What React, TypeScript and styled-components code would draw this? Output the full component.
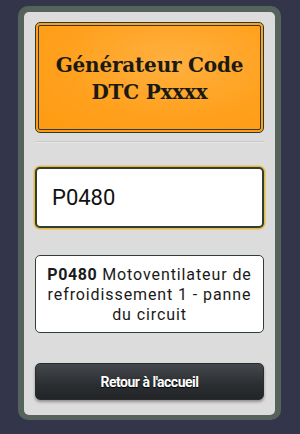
import styled, { createGlobalStyle } from "styled-components";

const GlobalStyle = createGlobalStyle`
  html, body {
    margin: 0;
    padding: 0;
    background: #33354a;
  }
  body {
    font-family: Roboto, "Liberation Sans", sans-serif;
  }
`;

export default function App() {
  return (
    <>
      <GlobalStyle />
      <Frame>
        <Panel>
          <TitleBox>
            <Title>
              Générateur Code
              <br />
              DTC Pxxxx
            </Title>
          </TitleBox>
          <Separator />
          <CodeInput defaultValue="P0480" />
          <Result>
            <ResultText>
              <b>P0480</b> Motoventilateur de refroidissement 1 - panne du circuit
            </ResultText>
          </Result>
          <HomeButton>Retour à l'accueil</HomeButton>
        </Panel>
      </Frame>
    </>
  );
}

const Frame = styled.div`
  margin: 6px 19px 0 18px;
  padding: 6px 6px 5px;
  background: #56635c;
  border-radius: 10px;
`;

const Panel = styled.div`
  display: flex;
  flex-direction: column;
  background: #dcdcdc;
  border-radius: 5px;
  padding: 10px 11px 15px;
`;

const TitleBox = styled.div`
  height: 111px;
  box-sizing: border-box;
  border: 1.5px solid #2e3a30;
  border-radius: 5px;
  padding: 2px;
  background: radial-gradient(ellipse at 60% 35%, #ffb040 0%, #ffa11e 55%, #ff9a10 100%);
`;

const Title = styled.div`
  height: 100%;
  box-sizing: border-box;
  border: 1.5px solid #2e3a30;
  border-radius: 2px;
  display: flex;
  align-items: center;
  justify-content: center;
  text-align: center;
  font-family: "DejaVu Serif", "Liberation Serif", serif;
  font-weight: bold;
  font-size: 20px;
  line-height: 27px;
  letter-spacing: -0.2px;
  color: #1a1a14;
  padding-top: 2px;
`;

const Separator = styled.div`
  height: 1px;
  margin: 8px 0 0;
  background: #c9c9c9;
  border-bottom: 1px solid #e6e6e6;
`;

const CodeInput = styled.input`
  margin-top: 24px;
  height: 61px;
  box-sizing: border-box;
  width: 100%;
  border: 2px solid #2f4033;
  border-radius: 5px;
  background: #ffffff;
  box-shadow: 0 0 0 1.5px #e8b840;
  padding: 0 15px;
  font-family: Roboto, sans-serif;
  font-size: 22px;
  color: #111;
  outline: none;
`;

const Result = styled.div`
  margin-top: 27px;
  height: 78px;
  box-sizing: border-box;
  border: 1.5px solid #2f4033;
  border-radius: 5px;
  background: #ffffff;
  display: flex;
  align-items: center;
  justify-content: center;
  padding: 2px 2px 0;
`;

const ResultText = styled.p`
  margin: 0;
  text-align: center;
  font-family: Roboto, sans-serif;
  font-size: 16px;
  line-height: 20px;
  letter-spacing: 0.9px;
  color: #1a1a1a;

  b {
    font-weight: bold;
    letter-spacing: 0.6px;
  }
`;

const HomeButton = styled.button`
  margin-top: 30px;
  height: 37px;
  border: 1px solid #2a2d30;
  border-radius: 5px;
  background: linear-gradient(#44474b, #2b2e31 60%, #222426);
  box-shadow: 0 2px 3px rgba(0, 0, 0, 0.35);
  color: #ffffff;
  font-family: Roboto, sans-serif;
  font-weight: bold;
  font-size: 14px;
  letter-spacing: -0.5px;
  text-shadow: 0 1px 1px #000;
  cursor: pointer;
`;
